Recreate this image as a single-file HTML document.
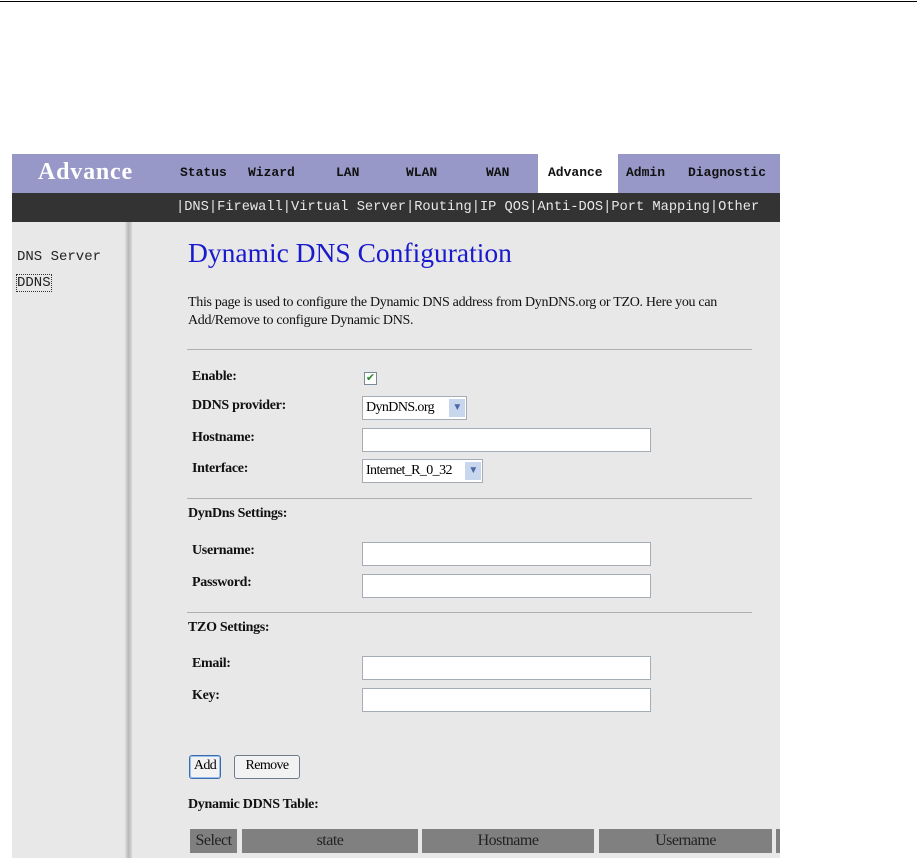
<!DOCTYPE html>
<html><head><meta charset="utf-8"><style>
body{margin:0;width:917px;height:858px;background:#fff;position:relative;overflow:hidden;font-family:"Liberation Serif",serif;}
.a{position:absolute;white-space:nowrap;}
.nav{font-family:"Liberation Mono",monospace;font-weight:bold;font-size:13px;color:#111;top:165px;}
.lbl{font-weight:bold;font-size:14px;color:#111;left:192px;letter-spacing:-0.3px;}
.inp{position:absolute;left:362px;width:287px;height:22px;background:#fff;border:1px solid #a5acb5;}
.hr{position:absolute;left:187px;width:565px;height:1px;background:#b0b0b0;}
.th{position:absolute;top:829px;height:24px;background:#808080;color:#222;font-size:16px;line-height:24px;text-align:center;letter-spacing:-0.5px;}
.sel{position:absolute;left:362px;height:22px;background:#fff;border:1px solid #a5acb5;font-size:14px;line-height:22px;padding-left:3px;box-sizing:content-box;letter-spacing:-0.6px;}
.arr{position:absolute;right:1px;top:2px;width:16px;height:18px;background:#c8d6ee;color:#4a6aa8;font-size:10px;line-height:18px;text-align:center;}
.btn{position:absolute;top:755px;height:22px;background:#f2f2f2;border:1px solid #6d7b8c;border-radius:3px;font-size:14px;line-height:20px;text-align:center;letter-spacing:-0.6px;}
</style></head><body>
<div class="a" style="left:0;top:1px;width:917px;height:1px;background:#000"></div>
<div class="a" style="left:12px;top:154px;width:768px;height:39px;background:#9898c8"></div>
<div class="a" style="left:538px;top:154px;width:80px;height:39px;background:#fff"></div>
<div class="a" style="left:38px;top:159px;font-size:24px;font-weight:bold;color:#fff;letter-spacing:0.8px">Advance</div>
<div class="a nav" style="left:180px">Status</div>
<div class="a nav" style="left:248px">Wizard</div>
<div class="a nav" style="left:336px">LAN</div>
<div class="a nav" style="left:406px">WLAN</div>
<div class="a nav" style="left:486px">WAN</div>
<div class="a nav" style="left:548px">Advance</div>
<div class="a nav" style="left:626px">Admin</div>
<div class="a nav" style="left:688px">Diagnostic</div>
<div class="a" style="left:12px;top:193px;width:768px;height:29px;background:#333"></div>
<div class="a" style="left:176px;top:200px;font-family:'Liberation Mono',monospace;font-size:13.7px;color:#e8e8e8">|DNS|Firewall|Virtual Server|Routing|IP QOS|Anti-DOS|Port Mapping|Other</div>
<div class="a" style="left:12px;top:222px;width:768px;height:636px;background:#e8e8e8"></div>
<div class="a" style="left:125px;top:222px;width:7px;height:636px;background:linear-gradient(90deg,#e0e0e0,#b8b8b8,#d8d8d8)"></div>
<div class="a" style="left:17px;top:249px;font-family:'Liberation Mono',monospace;font-size:14px;color:#222">DNS Server</div>
<div class="a" style="left:17px;top:275px;font-family:'Liberation Mono',monospace;font-size:14px;color:#222;outline:1px dotted #333">DDNS</div>
<div class="a" style="left:188px;top:237px;font-size:27.5px;color:#1a1acc">Dynamic DNS Configuration</div>
<div class="a" style="left:188px;top:294px;font-size:14px;color:#111;letter-spacing:-0.3px;line-height:18px">This page is used to configure the Dynamic DNS address from DynDNS.org or TZO. Here you can<br>Add/Remove to configure Dynamic DNS.</div>
<div class="hr" style="top:349px"></div>
<div class="a lbl" style="top:369px">Enable:</div>
<div class="a" style="left:364px;top:372px;width:11px;height:11px;border:1px solid #7a8a99;background:#fff;color:#2a8a2a;font-size:11px;line-height:11px;text-align:center">✔</div>
<div class="a lbl" style="top:398px">DDNS provider:</div>
<div class="sel" style="top:396px;width:100px">DynDNS.org<div class="arr">▼</div></div>
<div class="a lbl" style="top:430px">Hostname:</div>
<div class="inp" style="top:428px"></div>
<div class="a lbl" style="top:461px">Interface:</div>
<div class="sel" style="top:459px;width:116px">Internet_R_0_32<div class="arr">▼</div></div>
<div class="hr" style="top:498px"></div>
<div class="a lbl" style="left:188px;top:506px">DynDns Settings:</div>
<div class="a lbl" style="top:543px">Username:</div>
<div class="inp" style="top:542px"></div>
<div class="a lbl" style="top:575px">Password:</div>
<div class="inp" style="top:574px"></div>
<div class="hr" style="top:612px"></div>
<div class="a lbl" style="left:188px;top:620px">TZO Settings:</div>
<div class="a lbl" style="top:656px">Email:</div>
<div class="inp" style="top:656px"></div>
<div class="a lbl" style="top:688px">Key:</div>
<div class="inp" style="top:688px"></div>
<div class="btn" style="left:189px;width:30px;border-color:#3c6cb0;box-shadow:inset 0 0 0 1px #9cc0ee">Add</div>
<div class="btn" style="left:234px;width:64px">Remove</div>
<div class="a lbl" style="left:188px;top:797px">Dynamic DDNS Table:</div>
<div class="th" style="left:190px;width:47px">Select</div>
<div class="th" style="left:242px;width:176px">state</div>
<div class="th" style="left:422px;width:172px">Hostname</div>
<div class="th" style="left:599px;width:173px">Username</div>
<div class="th" style="left:776px;width:4px"></div>
</body></html>
